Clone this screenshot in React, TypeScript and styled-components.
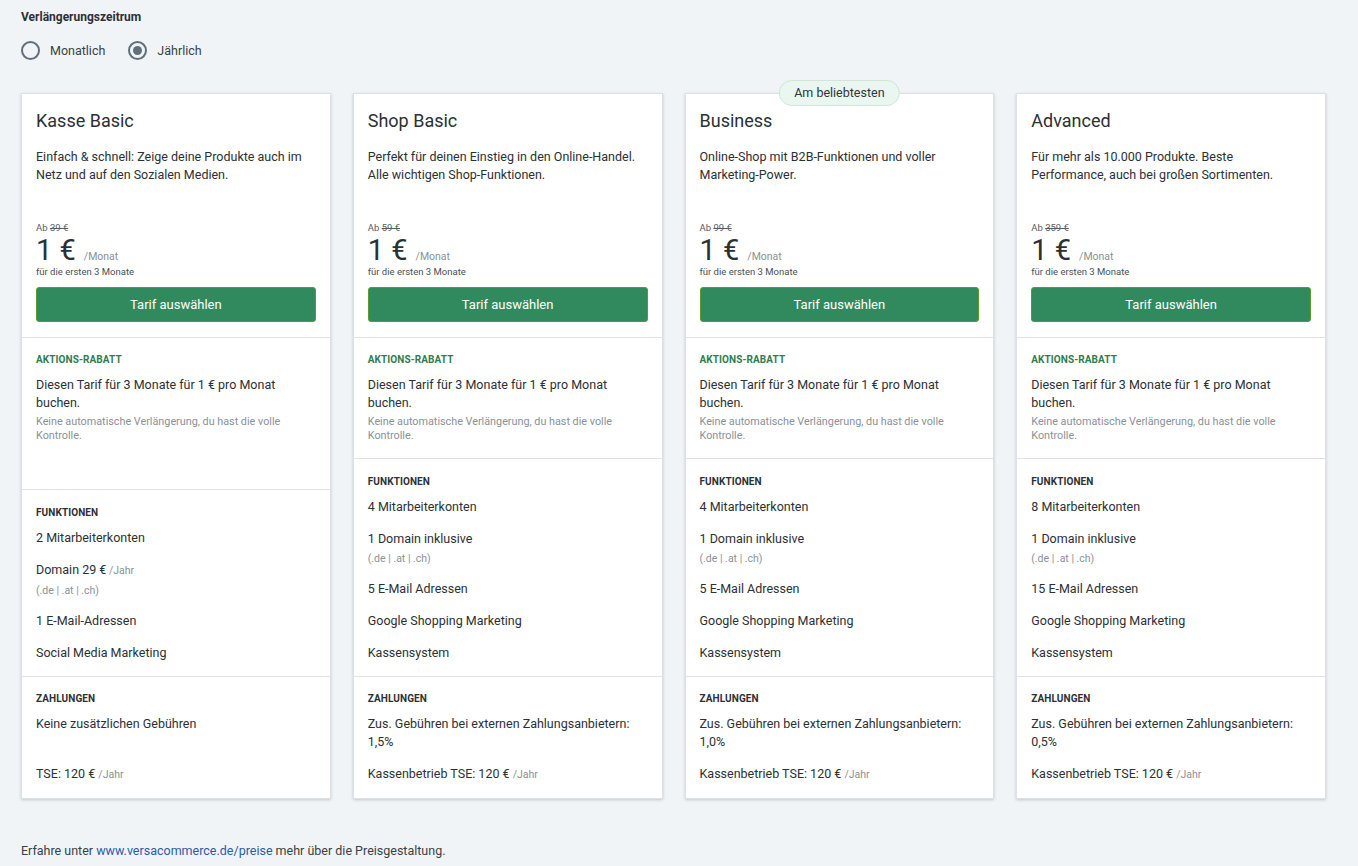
import React from "react";
import styled, { createGlobalStyle } from "styled-components";

const Global = createGlobalStyle`
  html, body { margin: 0; padding: 0; background: #f1f4f7; }
  body { font-family: Roboto, "Noto Sans", "Liberation Sans", sans-serif; color: #2b3035; -webkit-font-smoothing: antialiased; }
  * { box-sizing: border-box; }
`;

const Page = styled.div`
  padding: 9px 32px 0 21px;
  width: 1358px;
  min-height: 866px;
`;

const GroupLabel = styled.div`
  font-size: 12px;
  line-height: 16px;
  font-weight: 700;
  color: #2b3035;
`;

const RadioRow = styled.div`
  display: flex;
  align-items: center;
  gap: 23px;
  margin-top: 16px;
  height: 18px;
`;

const RadioItem = styled.label`
  display: flex;
  align-items: center;
  gap: 10px;
  font-size: 12.5px;
  color: #3a3f44;
`;

const RadioCircle = styled.span<{ $checked?: boolean }>`
  width: 19px;
  height: 19px;
  border-radius: 50%;
  border: 2px solid #5f6f7d;
  display: flex;
  align-items: center;
  justify-content: center;
  &::after {
    content: "";
    width: 9px;
    height: 9px;
    border-radius: 50%;
    background: ${(p) => (p.$checked ? "#5f6f7d" : "transparent")};
  }
`;

const Grid = styled.div`
  display: grid;
  grid-template-columns: repeat(4, 1fr);
  gap: 22px;
  margin-top: 34px;
  width: 1305px;
`;

const Card = styled.div`
  position: relative;
  background: #fff;
  border: 1px solid #dde1e5;
  box-shadow: 0 1px 3px rgba(0, 0, 0, 0.18);
  display: flex;
  flex-direction: column;
`;

const Badge = styled.div`
  position: absolute;
  top: -14px;
  left: 50%;
  transform: translateX(-50%);
  height: 26px;
  padding: 0 14px;
  border-radius: 13px;
  background: #eaf7f0;
  border: 1px solid #cfe5d8;
  font-size: 12.5px;
  line-height: 24px;
  color: #2f3439;
  white-space: nowrap;
`;

const Header = styled.div`
  padding: 15px 14px 15px 14px;
`;

const Section = styled.div<{ $grow?: boolean; $top?: number; $bottom?: number }>`
  padding: ${(p) => p.$top ?? 15}px 14px ${(p) => p.$bottom ?? 15}px 14px;
  border-top: 1px solid #e0e3e6;
  flex: ${(p) => (p.$grow ? "1 1 auto" : "0 0 auto")};
`;

const Title = styled.div`
  font-size: 18px;
  line-height: 24px;
  color: #2b3035;
`;

const Desc = styled.div`
  margin-top: 15px;
  padding-right: 10px;
  font-size: 12.5px;
  line-height: 18px;
  color: #2b3035;
  min-height: 74px;
`;

const Was = styled.div`
  font-size: 9.5px;
  line-height: 12px;
  color: #555b60;
`;

const PriceLine = styled.div`
  display: flex;
  align-items: baseline;
  gap: 8px;
  height: 32px;
  line-height: 32px;
`;

const Big = styled.span`
  font-size: 29px;
  color: #2b3035;
`;

const Per = styled.span`
  font-size: 10.5px;
  color: #8a9197;
`;

const Note = styled.div`
  font-size: 9.5px;
  line-height: 12px;
  color: #4a5055;
`;

const Button = styled.button`
  display: block;
  width: 100%;
  margin-top: 9px;
  height: 35px;
  background: #308a5e;
  border: 1px solid #5c9a2c;
  border-radius: 3px;
  color: #fff;
  font-family: inherit;
  font-size: 13px;
  cursor: pointer;
`;

const Label = styled.div<{ $green?: boolean }>`
  font-size: 10px;
  line-height: 14px;
  font-weight: 700;
  letter-spacing: 0.1px;
  color: ${(p) => (p.$green ? "#2e7d50" : "#2b3035")};
  text-transform: uppercase;
`;

const Body = styled.div<{ $minLines?: number }>`
  margin-top: 9px;
  font-size: 12.5px;
  line-height: 18px;
  color: #2b3035;
  min-height: ${(p) => (p.$minLines ? p.$minLines * 18 : 0)}px;
`;

const Small = styled.div`
  margin-top: 3px;
  font-size: 10.8px;
  line-height: 14px;
  color: #8a9197;
`;

const FeatureList = styled.div`
  margin-top: 9px;
  display: flex;
  flex-direction: column;
  gap: 14px;
`;

const Feature = styled.div`
  font-size: 12.5px;
  line-height: 18px;
  color: #2b3035;
`;

const Muted = styled.span`
  font-size: 10.5px;
  color: #8a9197;
`;

const FeatureSub = styled.div`
  margin-top: 3px;
  font-size: 10.5px;
  line-height: 15px;
  color: #8a9197;
`;

const Tse = styled.div`
  margin-top: 14px;
  font-size: 12.5px;
  line-height: 18px;
  color: #2b3035;
`;

const Footer = styled.div`
  margin-top: 43px;
  font-size: 12.5px;
  line-height: 18px;
  color: #3a3f44;
  a { color: #2a5aa8; text-decoration: none; }
`;

type Feat = { text: string; muted?: string; sub?: string };
type Plan = {
  name: string;
  desc: string;
  was: string;
  badge?: string;
  features: Feat[];
  payment: string;
  tse: string;
};

const plans: Plan[] = [
  {
    name: "Kasse Basic",
    desc: "Einfach & schnell: Zeige deine Produkte auch im Netz und auf den Sozialen Medien.",
    was: "39 €",
    features: [
      { text: "2 Mitarbeiterkonten" },
      { text: "Domain 29 €", muted: "/Jahr", sub: "(.de | .at | .ch)" },
      { text: "1 E-Mail-Adressen" },
      { text: "Social Media Marketing" },
    ],
    payment: "Keine zusätzlichen Gebühren",
    tse: "TSE: 120 €",
  },
  {
    name: "Shop Basic",
    desc: "Perfekt für deinen Einstieg in den Online-Handel. Alle wichtigen Shop-Funktionen.",
    was: "59 €",
    features: [
      { text: "4 Mitarbeiterkonten" },
      { text: "1 Domain inklusive", sub: "(.de | .at | .ch)" },
      { text: "5 E-Mail Adressen" },
      { text: "Google Shopping Marketing" },
      { text: "Kassensystem" },
    ],
    payment: "Zus. Gebühren bei externen Zahlungsanbietern: 1,5%",
    tse: "Kassenbetrieb TSE: 120 €",
  },
  {
    name: "Business",
    desc: "Online-Shop mit B2B-Funktionen und voller Marketing-Power.",
    was: "99 €",
    badge: "Am beliebtesten",
    features: [
      { text: "4 Mitarbeiterkonten" },
      { text: "1 Domain inklusive", sub: "(.de | .at | .ch)" },
      { text: "5 E-Mail Adressen" },
      { text: "Google Shopping Marketing" },
      { text: "Kassensystem" },
    ],
    payment: "Zus. Gebühren bei externen Zahlungsanbietern: 1,0%",
    tse: "Kassenbetrieb TSE: 120 €",
  },
  {
    name: "Advanced",
    desc: "Für mehr als 10.000 Produkte. Beste Performance, auch bei großen Sortimenten.",
    was: "359 €",
    features: [
      { text: "8 Mitarbeiterkonten" },
      { text: "1 Domain inklusive", sub: "(.de | .at | .ch)" },
      { text: "15 E-Mail Adressen" },
      { text: "Google Shopping Marketing" },
      { text: "Kassensystem" },
    ],
    payment: "Zus. Gebühren bei externen Zahlungsanbietern: 0,5%",
    tse: "Kassenbetrieb TSE: 120 €",
  },
];

export default function App() {
  return (
    <>
      <Global />
      <Page>
        <GroupLabel>Verlängerungszeitrum</GroupLabel>
        <RadioRow>
          <RadioItem>
            <RadioCircle />
            Monatlich
          </RadioItem>
          <RadioItem>
            <RadioCircle $checked />
            Jährlich
          </RadioItem>
        </RadioRow>
        <Grid>
          {plans.map((p) => (
            <Card key={p.name}>
              {p.badge && <Badge>{p.badge}</Badge>}
              <Header>
                <Title>{p.name}</Title>
                <Desc>{p.desc}</Desc>
                <Was>
                  Ab <s>{p.was}</s>
                </Was>
                <PriceLine>
                  <Big>1 €</Big>
                  <Per>/Monat</Per>
                </PriceLine>
                <Note>für die ersten 3 Monate</Note>
                <Button>Tarif auswählen</Button>
              </Header>
              <Section $grow>
                <Label $green>Aktions-Rabatt</Label>
                <Body>Diesen Tarif für 3 Monate für 1 € pro Monat buchen.</Body>
                <Small>Keine automatische Verlängerung, du hast die volle Kontrolle.</Small>
              </Section>
              <Section $top={16} $bottom={14}>
                <Label>Funktionen</Label>
                <FeatureList>
                  {p.features.map((f) => (
                    <Feature key={f.text}>
                      {f.text}
                      {f.muted && <Muted> {f.muted}</Muted>}
                      {f.sub && <FeatureSub>{f.sub}</FeatureSub>}
                    </Feature>
                  ))}
                </FeatureList>
              </Section>
              <Section $bottom={14}>
                <Label>Zahlungen</Label>
                <Body $minLines={2}>{p.payment}</Body>
                <Tse>
                  {p.tse} <Muted>/Jahr</Muted>
                </Tse>
              </Section>
            </Card>
          ))}
        </Grid>
        <Footer>
          Erfahre unter <a href="#">www.versacommerce.de/preise</a> mehr über die Preisgestaltung.
        </Footer>
      </Page>
    </>
  );
}
